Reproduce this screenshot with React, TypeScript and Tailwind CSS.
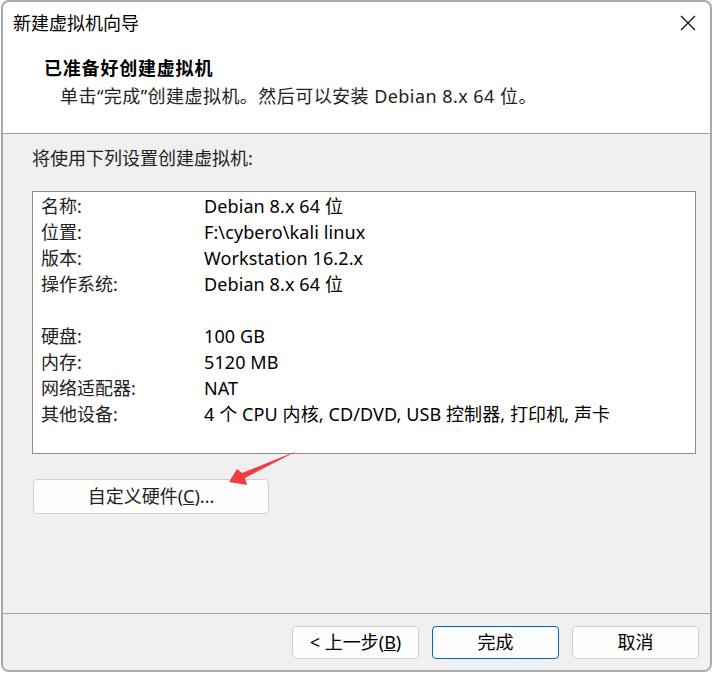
import React from 'react';

const font = { fontFamily: '"Noto Sans", "Noto Sans CJK SC", sans-serif' };

const rows: Array<[string, string]> = [
  ['名称:', 'Debian 8.x 64 位'],
  ['位置:', 'F:\\cybero\\kali linux'],
  ['版本:', 'Workstation 16.2.x'],
  ['操作系统:', 'Debian 8.x 64 位'],
  ['', ''],
  ['硬盘:', '100 GB'],
  ['内存:', '5120 MB'],
  ['网络适配器:', 'NAT'],
  ['其他设备:', '4 个 CPU 内核, CD/DVD, USB 控制器, 打印机, 声卡'],
];

function Arrow() {
  return (
    <svg className="absolute left-[225px] top-[448px]" width="76" height="40" viewBox="0 0 76 40">
      <polygon points="4,34 12,21 17,25 72,3 20,30 22,37" fill="#f23d3f" />
    </svg>
  );
}

export default function App() {
  return (
    <div className="w-[714px] h-[674px] bg-white text-black relative" style={font}>
      <div className="ml-[1px] w-[711px] h-[672px] border-2 border-[#a9a9a9] rounded-[8px] overflow-hidden flex flex-col bg-white">
        {/* title bar */}
        <div className="h-[42px] flex items-center justify-between pl-[10px] pr-[14px]">
          <span className="text-[18px]">新建虚拟机向导</span>
          <svg width="16" height="16" viewBox="0 0 16 16">
            <path d="M1 1L15 15M15 1L1 15" stroke="#111" strokeWidth="1.3" />
          </svg>
        </div>
        {/* header */}
        <div className="h-[89px] pl-[41px] pt-[12px]">
          <div className="text-[18px] font-bold leading-[24px] tracking-[0.8px]">已准备好创建虚拟机</div>
          <div className="text-[18px] leading-[24px] mt-[4px] pl-[16px] text-[#222] tracking-[0.45px]">
            单击“完成”创建虚拟机。然后可以安装 Debian 8.x 64 位。
          </div>
        </div>
        <div className="border-t border-[#a0a0a0]" />
        {/* body */}
        <div className="flex-1 bg-[#f0f0f0] pl-[29px] pr-[14px] pt-[12px]">
          <div className="text-[18px] leading-[24px] text-[#222]">将使用下列设置创建虚拟机:</div>
          <div className="mt-[21px] h-[263px] border border-[#8c8c8c] bg-white pt-[1px] pl-[8px]">
            {rows.map(([k, v], i) => (
              <div key={i} className="flex h-[26px] items-center text-[18px]">
                <span className="w-[163px] text-[#222]">{k}</span>
                <span className="tracking-[0.1px]">{v}</span>
              </div>
            ))}
          </div>
          <button className="mt-[25px] ml-[1px] w-[236px] h-[35px] bg-[#fdfdfd] border border-[#d0d0d0] rounded-[4px] text-[18px] text-[#222]">
            自定义硬件(<span className="underline">C</span>)...
          </button>
        </div>
        <div className="border-t border-[#a0a0a0] bg-[#f0f0f0] h-[57px] flex justify-end gap-[13px] pt-[12px] pr-[11px]">
          <button className="w-[127px] h-[33px] bg-[#fdfdfd] border border-[#d0d0d0] rounded-[4px] text-[18px]">
            &lt; 上一步(<span className="underline">B</span>)
          </button>
          <button className="w-[127px] h-[33px] bg-[#fdfdfd] border border-[#0067c0] rounded-[4px] text-[18px]">
            完成
          </button>
          <button className="w-[127px] h-[33px] bg-[#fdfdfd] border border-[#d0d0d0] rounded-[4px] text-[18px]">
            取消
          </button>
        </div>
      </div>
      <Arrow />
    </div>
  );
}
